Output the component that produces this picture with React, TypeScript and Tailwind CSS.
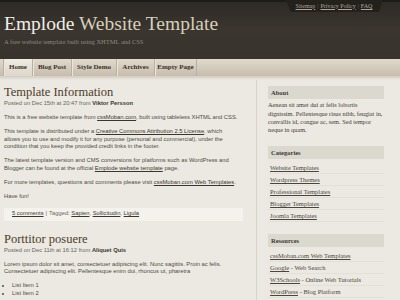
import React from "react";

const serif = { fontFamily: "'Liberation Serif', 'Times New Roman', serif" };
const sans = { fontFamily: "'Liberation Sans', Arial, sans-serif" };

function NavItem({ label, w, active }: { label: string; w: string; active?: boolean }) {
  return (
    <div
      className={`${w} h-full flex items-center justify-center border-r border-r-[#b9b0a1] shadow-[inset_1px_0_0_#ebe6dc] text-[7px] font-bold text-[#3a3128] ${
        active ? "bg-gradient-to-b from-[#efebe3] to-[#dcd6cb]" : ""
      }`}
    >
      {label}
    </div>
  );
}

function SideHead({ title }: { title: string }) {
  return (
    <div className="h-[13px] bg-[#dbd9cf] flex items-center pl-[3px] text-[6.5px] font-bold text-[#3d3830]">
      {title}
    </div>
  );
}

function SideLink({ children }: { children: React.ReactNode }) {
  return (
    <div className="h-[12px] flex items-center pl-[2px] border-b border-b-[#e2e0d7] text-[6.5px] text-[#4a463d]">
      {children}
    </div>
  );
}

export default function App() {
  const link = "underline text-[#3a362e]";
  return (
    <div className="w-[400px] h-[300px] overflow-hidden bg-[#ebe9e1]" style={sans}>
      {/* Header */}
      <div className="h-[59px] bg-gradient-to-b from-[#2e2a25] via-[#3a352f] to-[#38332d] border-t-2 border-t-[#1e1b18] flex flex-col" style={serif}>
        <div className="h-[10px] flex justify-end pr-[18px]">
          <div className="h-[12px] -mt-[2px] w-[96px] bg-[#24211d] [clip-path:polygon(0_0,100%_0,97%_100%,5%_100%)] flex items-center justify-center gap-[2px] text-[6px] text-[#aaa59a]">
            <span className="underline">Sitemap</span>
            <span className="text-[#6c675e]">|</span>
            <span className="underline">Privacy Policy</span>
            <span className="text-[#6c675e]">|</span>
            <span className="underline">FAQ</span>
          </div>
        </div>
        <div className="mt-[2px] pl-[4px] text-[19.5px] leading-[19px] whitespace-nowrap">
          <span className="text-[#f1eee6]">Emplode</span>{" "}
          <span className="text-[#d8cfba]">Website Template</span>
        </div>
        <div className="mt-[4.6px] pl-[4px] text-[6.5px] leading-[8px] text-[#8f8a80]">
          A free website template built using XHTML and CSS
        </div>
      </div>

      {/* Nav */}
      <div className="h-[17px] bg-gradient-to-b from-[#e0d9cd] to-[#c6bdad] flex" style={serif}>
        <div className="w-[4px] h-full border-r border-r-[#b9b0a1]" />
        <NavItem label="Home" w="w-[29px]" active />
        <NavItem label="Blog Post" w="w-[39px]" />
        <NavItem label="Style Demo" w="w-[45px]" />
        <NavItem label="Archives" w="w-[38px]" />
        <NavItem label="Empty Page" w="w-[42px]" />
      </div>
      <div className="h-[4px] bg-gradient-to-b from-[#d3ccbf] to-[#ebe9e1] -mb-[4px] relative" />

      {/* Content */}
      <div className="flex">
        <div className="ml-[4px] w-[239px] text-[5.8px] leading-[7.7px] text-[#4e4b43]">
          <div className="mt-[8px] text-[12.5px] leading-[16px] text-[#4b3b2b]" style={serif}>
            Template Information
          </div>
          <div className="text-[#6a665d]">
            Posted on Dec 15th at 20:47 from <span className="font-bold text-[#3b372f]">Viktor Persson</span>
          </div>
          <p className="mt-[6.3px] whitespace-nowrap">
            This is a free website template from <span className={link}>cssMoban.com</span>, built using tableless XHTML and CSS.
          </p>
          <p className="mt-[6.3px] whitespace-nowrap">
            This template is distributed under a <span className={link}>Creative Commons Attribution 2.5 License</span>, which
            <br />
            allows you to use and modify it for any purpose (personal and commercial), under the
            <br />
            condition that you keep the provided credit links in the footer.
          </p>
          <p className="mt-[6.3px] whitespace-nowrap">
            The latest template version and CMS conversions for platforms such as WordPress and
            <br />
            Blogger can be found at the official <span className={link}>Emplode website template</span> page.
          </p>
          <p className="mt-[6.3px] whitespace-nowrap">
            For more templates, questions and comments please visit <span className={link}>cssMoban.com Web Templates</span>.
          </p>
          <p className="mt-[6.3px]">Have fun!</p>
          <div className="mt-[7px] h-[13px] bg-[#f3f2ec] flex items-center pl-[8px] text-[#6a665d]">
            <span className={link}>5 comments</span>
            <span className="mx-[2px]">|</span>
            <span>Tagged:&nbsp;</span>
            <span className={link}>Sapien</span>,&nbsp;
            <span className={link}>Sollicitudin</span>,&nbsp;
            <span className={link}>Ligula</span>
          </div>
          <div className="mt-[9.7px] text-[12.5px] leading-[16px] text-[#4b3b2b]" style={serif}>
            Porttitor posuere
          </div>
          <div className="text-[#6a665d]">
            Posted on Dec 11th at 16:12 from <span className="font-bold text-[#3b372f]">Aliquet Quis</span>
          </div>
          <p className="mt-[6.3px] whitespace-nowrap">
            Lorem ipsum dolor sit amet, consectetuer adipiscing elit. Nunc sagittis. Proin ac felis.
            <br />
            Consectetuer adipiscing elit. Pellentesque enim dui, rhoncus ut, pharetra
          </p>
          <ul className="mt-[6px] pl-[8px] list-disc">
            <li>List Item 1</li>
            <li>List Item 2</li>
          </ul>
        </div>

        <div className="ml-[13px] mt-[4px] w-px h-[240px] bg-[#d7d4ca]" />

        <div className="ml-[11px] mt-[10px] w-[116px]" style={serif}>
          <SideHead title="About" />
          <p className="mt-[2.3px] text-[6.3px] leading-[8.3px] text-[#3f3b34]">
            Aenean sit amet dui at felis lobortis dignissim. Pellentesque risus nibh, feugiat in, convallis id, congue ac, sem. Sed tempor neque in quam.
          </p>
          <div className="mt-[12px]">
            <SideHead title="Categories" />
          </div>
          <div className="mt-[3px]">
            <SideLink><span className="underline">Website Templates</span></SideLink>
            <SideLink><span className="underline">Wordpress Themes</span></SideLink>
            <SideLink><span className="underline">Professional Templates</span></SideLink>
            <SideLink><span className="underline">Blogger Templates</span></SideLink>
            <SideLink><span className="underline">Joomla Templates</span></SideLink>
          </div>
          <div className="mt-[12px]">
            <SideHead title="Resources" />
          </div>
          <div className="mt-[3px]">
            <SideLink><span className="underline">cssMoban.com Web Templates</span></SideLink>
            <SideLink><span className="underline">Google</span>&nbsp;- Web Search</SideLink>
            <SideLink><span className="underline">W3Schools</span>&nbsp;- Online Web Tutorials</SideLink>
            <SideLink><span className="underline">WordPress</span>&nbsp;- Blog Platform</SideLink>
          </div>
        </div>
      </div>
    </div>
  );
}
